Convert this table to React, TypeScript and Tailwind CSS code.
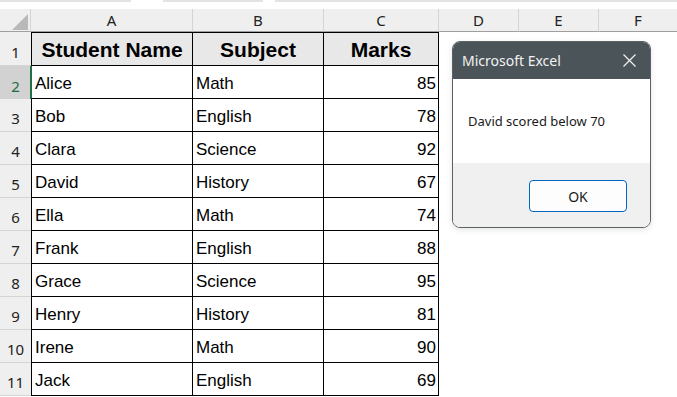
import React from "react";

const rows = [
  { name: "Alice", subject: "Math", marks: 85 },
  { name: "Bob", subject: "English", marks: 78 },
  { name: "Clara", subject: "Science", marks: 92 },
  { name: "David", subject: "History", marks: 67 },
  { name: "Ella", subject: "Math", marks: 74 },
  { name: "Frank", subject: "English", marks: 88 },
  { name: "Grace", subject: "Science", marks: 95 },
  { name: "Henry", subject: "History", marks: 81 },
  { name: "Irene", subject: "Math", marks: 90 },
  { name: "Jack", subject: "English", marks: 69 },
];

const headFont = { fontFamily: '"Noto Sans", "Open Sans", sans-serif' };

function ColHead({ label, last }: { label: string; last?: boolean }) {
  return (
    <div
      className={`flex h-[23px] items-end justify-center border-b border-[#9f9f9f] bg-[#efefef] pb-[1px] text-[15px] leading-[20px] text-[#222] ${
        last ? "" : "border-r border-r-[#d4d4d4]"
      }`}
      style={headFont}
    >
      {label}
    </div>
  );
}

function RowHead({ n, active }: { n: number; active?: boolean }) {
  return (
    <div
      className={`flex items-end justify-center pb-[3px] text-[15px] leading-[20px] ${
        active
          ? "bg-[#d2d2d2] text-[#1b6b3f] shadow-[inset_-1px_0_0_#1f7145]"
          : "bg-[#efefef] text-[#222] border-b border-[#d4d4d4]"
      }`}
      style={headFont}
    >
      {n}
    </div>
  );
}

// sheet + message box
export default function App() {
  return (
    <div
      className="relative h-[397px] w-[677px] overflow-hidden bg-white"
      style={{ fontFamily: '"Liberation Sans", Arial, sans-serif' }}
    >
      {/* ribbon remnants */}
      <div className="flex h-[9px] gap-[32px] bg-white">
        <div className="h-[2px] w-[131px] bg-[#e3e3e3]" />
        <div className="flex gap-[12px]">
          <div className="h-[2px] w-[100px] bg-[#e3e3e3]" />
          <div className="h-[2px] w-[402px] bg-[#e3e3e3]" />
        </div>
      </div>

      <div className="grid grid-cols-[31px_162px_131px_115px_80px_80px_78px]">
        {/* column headers */}
        <div className="relative h-[23px] border-b border-r border-[#9f9f9f] border-r-[#d4d4d4] bg-[#efefef]">
          <svg className="absolute left-[12px] top-[5px]" width="16" height="16" viewBox="0 0 16 16">
            <path d="M16 0 L16 16 L0 16 Z" fill="#b9b9b9" />
          </svg>
        </div>
        <ColHead label="A" />
        <ColHead label="B" />
        <ColHead label="C" />
        <ColHead label="D" />
        <ColHead label="E" />
        <ColHead label="F" last />

        {/* header row */}
        <RowHead n={1} />
        <div className="flex h-[34px] items-end justify-center border border-black bg-[#e8e8e8] pb-[3px] text-[21px] font-bold leading-[25px] text-black">
          Student Name
        </div>
        <div className="flex h-[34px] items-end justify-center border-y border-r border-black bg-[#e8e8e8] pb-[3px] text-[21px] font-bold leading-[25px] text-black">
          Subject
        </div>
        <div className="flex h-[34px] items-end justify-center border-y border-r border-black bg-[#e8e8e8] pb-[3px] text-[21px] font-bold leading-[25px] text-black">
          Marks
        </div>
        <div />
        <div />
        <div />

        {rows.map((r, i) => (
          <React.Fragment key={r.name}>
            <RowHead n={i + 2} active={i === 0} />
            <div
              className={`flex h-[33px] items-end border-b border-l border-r border-black pb-[4px] pl-[3px] text-[17px] leading-[21px] text-black ${
                i === 0 ? "border-l-[#1f7145]" : ""
              }`}
            >
              {r.name}
            </div>
            <div className="flex h-[33px] items-end border-b border-r border-black pb-[4px] pl-[3px] text-[17px] leading-[21px] text-black">
              {r.subject}
            </div>
            <div className="flex h-[33px] items-end justify-end border-b border-r border-black pb-[4px] pr-[2px] text-[17px] leading-[21px] text-black">
              {r.marks}
            </div>
            <div />
            <div />
            <div />
          </React.Fragment>
        ))}
      </div>

      {/* message box */}
      <div
        className="absolute left-[452px] top-[41px] flex h-[187px] w-[199px] flex-col overflow-hidden rounded-[8px] border border-[#5b6266] bg-white shadow-[0_2px_6px_rgba(0,0,0,0.1)]"
        style={headFont}
      >
        <div className="flex h-[37px] shrink-0 items-center justify-between bg-[#4b5459] pl-[9px] pr-[14px] text-[14px] text-[#f2f2f2]">
          <span>Microsoft Excel</span>
          <svg width="13" height="13" viewBox="0 0 13 13" fill="none" stroke="#f2f2f2" strokeWidth="1.2">
            <path d="M0.5 0.5 L12.5 12.5 M12.5 0.5 L0.5 12.5" />
          </svg>
        </div>
        <div className="flex h-[84px] shrink-0 items-center pl-[15px] pt-[2px] text-[13px] text-[#1a1a1a]">
          David scored below 70
        </div>
        <div className="flex flex-1 items-start justify-end bg-[#f0f0f0] pr-[23px] pt-[17px]">
          <button className="flex h-[32px] w-[98px] items-center justify-center rounded-[4px] border border-[#0067c0] bg-[#fdfdfd] text-[14px] text-[#1a1a1a]">
            OK
          </button>
        </div>
      </div>
    </div>
  );
}
